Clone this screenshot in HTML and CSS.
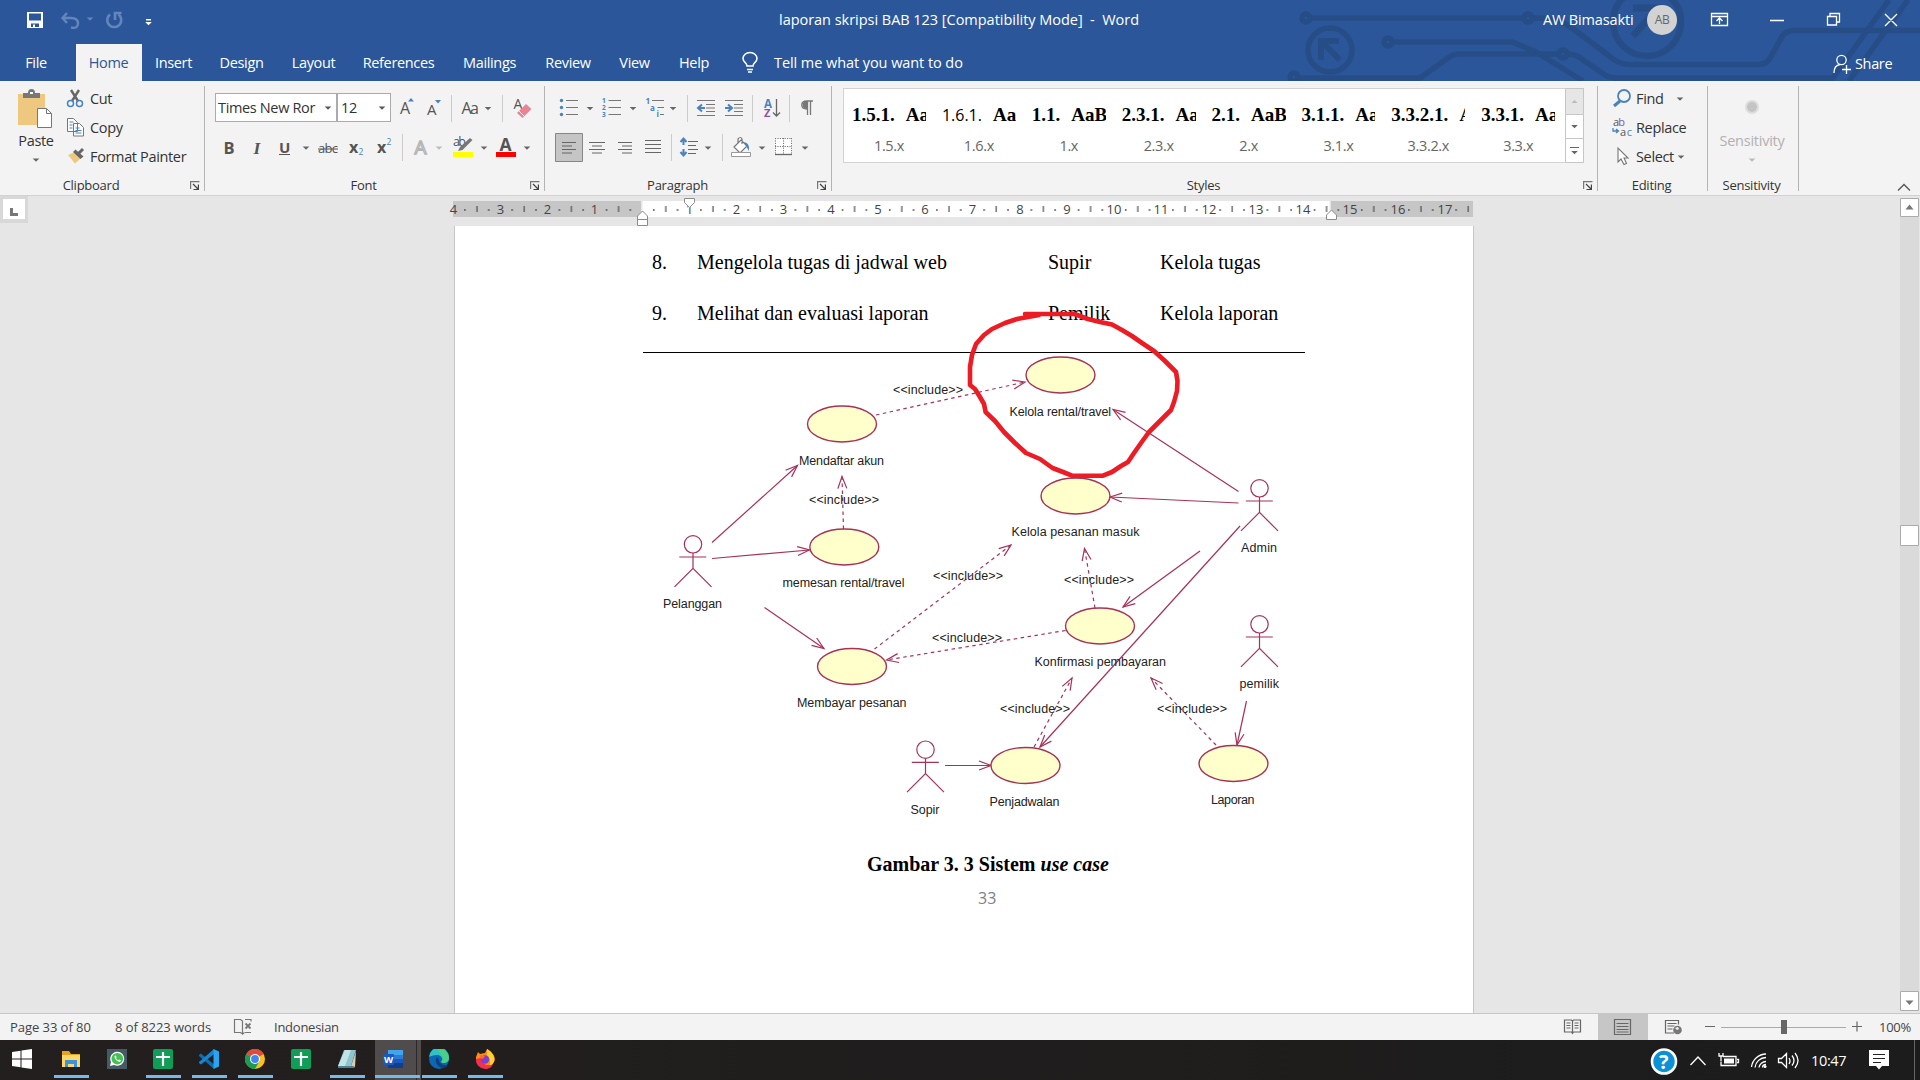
FILE: index.html
```html
<!DOCTYPE html>
<html lang="id">
<head>
<meta charset="utf-8">
<title>laporan skripsi BAB 123 [Compatibility Mode] - Word</title>
<link rel="stylesheet" href="styles.css">
</head>
<body>
<svg class="defs" width="0" height="0">
  <defs>
    <path id="arrow" d="M-3.3-1.6h6.6L0 1.8z"/>
    <g id="launcher" fill="none" stroke="#777" stroke-width="1.2"><path d="M.6 8V.6H9.5"/><path d="M3 3l5 5M8.4 3.5v5H3.5" stroke="#444"/></g>
    <g id="actor" fill="none" stroke="#a83158" stroke-width="1.2">
      <circle r="8.7" fill="#fff"/><path d="M0 8.7V24M-13.7 12.7h27M-18.5 42.5L0 24l18.5 18.5"/>
    </g>
    <ellipse id="usecase" rx="34.5" ry="18" fill="#ffffcc" stroke="#a83158" stroke-width="1.4"/>
    <marker id="head" markerUnits="userSpaceOnUse" markerWidth="16" markerHeight="14" refX="13" refY="6" orient="auto"><path d="M1 1.5L13 6 1 10.5" fill="none" stroke="#a83158" stroke-width="1.2"/></marker>
    <pattern id="ticks" patternUnits="userSpaceOnUse" x="642.1" y="0" width="47.2" height="300">
      <path d="M11 209h1.3v2H11zM23.1 206h1.2v6h-1.2zM34.8 209h1.3v2h-1.3z" fill="#505050"/>
    </pattern>
  </defs>
</svg>

<header class="titlebar">
  <svg class="circuit" width="640" height="81" viewBox="1280 0 640 81" fill="none" stroke="#264d86" stroke-width="5.5">
    <circle cx="1306" cy="18" r="4"/><circle cx="1528" cy="18" r="4"/><path d="M1310 18h214M1532 18c22 0 26 0 40 10l36 27q10 9 20 9.500h131q8 0 12-8l11-20q4-6 12-6h126"/>
    <circle cx="1388" cy="42" r="4"/><path d="M1392 42h120l24 10 47 29"/>
    <circle cx="1294" cy="77" r="4"/><path d="M1298 78h122l28-20q5-4 12-4h98"/><circle cx="1563" cy="54" r="4"/><path d="M1567 54q10 0 16 6l22 15q5 3 12 3h216l56-78M1849 81l59-81"/>
    <circle cx="1330" cy="50" r="22"/><path d="M1339 41h-18v19M1322 42l18 18" stroke-width="6"/>
    <circle cx="1647" cy="22" r="34" stroke-width="6.500"/><path d="M1633 8h25v21M1657 9l-24 27" stroke-width="7"/>
  </svg>
  <div class="title-row">
    <svg class="quick" width="160" height="43" viewBox="0 0 160 43">
      <path d="M27 12h16v16H27z" fill="#fff"/><path d="M29 13.500h12v7H29zM31 23.500h8V27H31z" fill="#2b579a"/><path d="M33 24.500h2V27h-2z" fill="#fff"/>
      <g fill="none" stroke="#6486bb" stroke-width="2.400"><path d="M67 13l-4.500 5 4.500 5M62.500 18H71q7 0 7 5.500t-7 4"/><path d="M118.500 14.500a7 7 0 1 1-8.500 0M115 20v-7h6.500" stroke-width="2.600"/></g>
      <use href="#arrow" x="90" y="19" fill="#6486bb"/><path d="M146 19h5v1.500h-5z" fill="#fff"/><use href="#arrow" x="148.500" y="23.500" fill="#fff"/>
    </svg>
    <div class="doc-title">laporan skripsi BAB 123 [Compatibility Mode]&nbsp; -&nbsp; Word</div>
    <div class="user">AW Bimasakti</div>
    <div class="avatar">AB</div>
    <svg class="window" width="243" height="43" viewBox="1677 0 243 43" fill="none" stroke="#fff" stroke-width="1.300">
      <path d="M1711.500 13.500h16v12h-16zM1711 16.500h17M1719.500 24v-6M1716.500 21l3-3 3 3M1770 20.500h14M1827.500 16.500h9v8.500h-9zM1830 16v-2.500h9.500V22h-3M1885 14l12 12M1897 14l-12 12"/>
    </svg>
  </div>
  <nav class="tabs">
    <span class="file">File</span><span class="active">Home</span><span>Insert</span><span>Design</span><span>Layout</span><span>References</span><span>Mailings</span><span>Review</span><span>View</span><span>Help</span>
    <svg width="50" height="38" viewBox="724 43 50 38" fill="none" stroke="#fff" stroke-width="1.600"><path d="M747 65c0-3-4-4-4-7.500a7 6 0 0 1 14 0c0 3.500-4 4.500-4 7.500zM747 68.500h6M748 71h4"/></svg>
    <span class="tell">Tell me what you want to do</span>
    <span class="share"><svg width="18" height="20" viewBox="1833 53 18 20" fill="none" stroke="#fff" stroke-width="1.300"><circle cx="1841.500" cy="59" r="4.700"/><path d="M1834 72c0-5 2-8 6-8.500M1842 68.500h9M1846.500 64v9"/></svg>Share</span>
  </nav>
</header>

<section class="ribbon">
  <div class="group clipboard">
    <div class="group-body">
      <div class="big paste">
        <svg width="40" height="42" viewBox="20 88 40 42"><path d="M22 94h27v31H22z" fill="#edc87e"/><path d="M27 98v-5h5q0-4 3.500-4t3.500 4h5v5z" fill="#777"/><path d="M34 92h3v2h-3z" fill="#fff"/><path d="M41.500 108.500h9l5 5v14h-14z" fill="#fff" stroke="#777"/><path d="M50.500 108.500v5h5" fill="none" stroke="#777"/></svg>
        <span>Paste</span>
        <svg width="10" height="6" viewBox="-5 -3 10 6"><use href="#arrow" fill="#666"/></svg>
      </div>
      <div class="stack">
        <div><svg width="24" height="29" viewBox="66 84 24 29" fill="none"><path d="M71 90l7 11M79 90l-7 11" stroke="#666" stroke-width="2.400"/><circle cx="70.500" cy="103.500" r="3" stroke="#4a82bd" stroke-width="1.500"/><circle cx="79.500" cy="103.500" r="3" stroke="#4a82bd" stroke-width="1.500"/></svg>Cut</div>
        <div><svg width="24" height="29" viewBox="66 113 24 29" fill="#fff" stroke="#777"><path d="M67.500 118.500h6l4 4v9h-10zM73.500 123.500h6l4 4v8.500h-10z"/><path d="M69.500 122h4M69.500 125h3M69.500 128h3M75.500 128h4M75.500 130.500h6M75.500 133h6" stroke="#4a82bd"/></svg>Copy</div>
        <div><svg width="24" height="29" viewBox="66 142 24 29"><path d="M68 155l7-3 6 6-6 5.500z" fill="#edc87e"/><path d="M73 152l2.500-2.500 8 7-3 2.500z" fill="#666"/><path d="M78 154l5-5" stroke="#666" stroke-width="3"/></svg>Format Painter</div>
      </div>
    </div>
    <div class="group-label">Clipboard<svg width="10" height="9"><use href="#launcher"/></svg></div>
  </div>

  <div class="group font">
    <div class="group-body rows">
      <div class="row">
        <div class="combo name"><span>Times New Ror</span><svg width="16" height="26" viewBox="-8 -13 16 26"><use href="#arrow" fill="#555"/></svg></div>
        <div class="combo size"><span>12</span><svg width="16" height="26" viewBox="-8 -13 16 26"><use href="#arrow" fill="#555"/></svg></div>
        <svg width="29" height="30" viewBox="391 93 29 30"><text x="400" y="114" class="ic" font-size="16" textLength="10">A</text><path d="M408 101.500h6l-3-3.500z" fill="#4a82bd"/></svg>
        <svg width="31" height="30" viewBox="420 93 31 30"><text x="427" y="115" class="ic" font-size="15" textLength="9.500">A</text><path d="M435 100h6l-3 3.500z" fill="#4a82bd"/></svg>
        <svg width="51" height="30" viewBox="451 93 51 30"><path d="M451.500 95v27" stroke="#ccc"/><text x="461.500" y="114" class="ic" font-size="16" textLength="17.500">Aa</text><use href="#arrow" x="488" y="108.500" fill="#666"/></svg>
        <svg width="42" height="30" viewBox="502 93 42 30"><path d="M502.500 95v27" stroke="#ccc"/><text x="513.500" y="109" class="ic" font-size="14">A</text><path d="M517 113l9-9 5.500 5-9 9z" fill="#e98497"/><path d="M518.500 110.500l6 6" stroke="#f3f3f3"/></svg>
      </div>
      <div class="row">
        <svg width="28" height="30" viewBox="215 133 28 30"><text x="223.500" y="153.500" class="ic b" font-size="16.500" textLength="9.500">B</text></svg>
        <svg width="24" height="30" viewBox="243 133 24 30"><text x="253.500" y="153.500" class="ic serif" font-size="17.500">I</text></svg>
        <svg width="46" height="30" viewBox="267 133 46 30"><text x="279" y="152.500" class="ic b" font-size="15" textLength="10.500">U</text><path d="M279 154.500h11" stroke="#555"/><use href="#arrow" x="306" y="148" fill="#666"/></svg>
        <svg width="30" height="30" viewBox="313 133 30 30"><text x="318" y="153" class="ic" font-size="13" textLength="20">abc</text><path d="M318 149h20" stroke="#555"/></svg>
        <svg width="27" height="30" viewBox="343 133 27 30"><text x="349" y="153" class="ic b" font-size="16" textLength="9">x</text><text x="358.500" y="155" class="blue" font-size="8.500">2</text></svg>
        <svg width="32" height="30" viewBox="370 133 32 30"><text x="377" y="153" class="ic b" font-size="16" textLength="9">x</text><text x="386.500" y="145" class="blue" font-size="8.500">2</text></svg>
        <svg width="43" height="30" viewBox="402 133 43 30"><path d="M402.500 134v27" stroke="#ccc"/><text x="414.500" y="154" font-size="19" fill="#fff" stroke="#b4b4b4" stroke-width="1.300" textLength="13">A</text><use href="#arrow" x="439" y="148" fill="#bbb"/></svg>
        <svg width="45" height="30" viewBox="445 133 45 30"><text x="453" y="146" class="ic" font-size="12.500" textLength="13">ab</text><path d="M458 151l2-4 10-9 2.500 2-10 10z" fill="#777"/><path d="M453 152h20v5h-20z" fill="#ff0"/><use href="#arrow" x="484" y="148" fill="#666"/></svg>
        <svg width="54" height="30" viewBox="490 133 54 30"><text x="499.500" y="151" class="ic b" font-size="17.500" textLength="12.500">A</text><path d="M496 152h20v5h-20z" fill="red"/><use href="#arrow" x="527" y="148" fill="#666"/></svg>
      </div>
    </div>
    <div class="group-label">Font<svg width="10" height="9"><use href="#launcher"/></svg></div>
  </div>

  <div class="group paragraph">
    <div class="group-body rows">
      <div class="row">
        <svg width="45" height="30" viewBox="555 93 45 30"><path d="M566 100.500h12M566 107.500h12M566 114.500h12" stroke="#777" stroke-width="1.200"/><g fill="#4a82bd"><circle cx="561.500" cy="100.500" r="1.700"/><circle cx="561.500" cy="107.500" r="1.700"/><circle cx="561.500" cy="114.500" r="1.700"/></g><use href="#arrow" x="590" y="108.500" fill="#666"/></svg>
        <svg width="42" height="30" viewBox="600 93 42 30"><path d="M608.500 100.500H621M608.500 107.500H621M608.500 114.500H621" stroke="#777" stroke-width="1.200"/><g class="blue b" font-size="6.500"><text x="602" y="103">1</text><text x="602" y="110">2</text><text x="602" y="117">3</text></g><use href="#arrow" x="633" y="108.500" fill="#666"/></svg>
        <svg width="45" height="30" viewBox="642 93 45 30"><path d="M652 100.500h12M657.500 107.500h6.500M660 114.500h4" stroke="#777" stroke-width="1.200"/><g class="blue b" font-size="8"><text x="645.500" y="104">1</text><text x="650" y="111">a</text><text x="656.500" y="117">i</text></g><use href="#arrow" x="673" y="108.500" fill="#666"/></svg>
        <svg width="34" height="30" viewBox="687 93 34 30"><path d="M687.500 95v27" stroke="#ccc"/><path d="M697 100.500h18M706 104.500h9M706 108h9M706 111.500h9M697 115.500h18" stroke="#777" stroke-width="1.200"/><path d="M698 108h7M702 104.500l-4 3.500 4 3.500" fill="none" stroke="#4a82bd" stroke-width="2"/></svg>
        <svg width="31" height="30" viewBox="721 93 31 30"><path d="M725 100.500h18M734 104.500h9M734 108h9M734 111.500h9M725 115.500h18" stroke="#777" stroke-width="1.200"/><path d="M725 108h7M728 104.500l4 3.500-4 3.500" fill="none" stroke="#4a82bd" stroke-width="2"/></svg>
        <svg width="37" height="30" viewBox="752 93 37 30"><path d="M752.500 95v27" stroke="#ccc"/><text x="764" y="107.500" font-size="11.500" class="blue b" textLength="8">A</text><text x="764" y="117" font-size="11" class="b" fill="#8a52ab" textLength="7">Z</text><path d="M776.500 99v17M773 112.500l3.500 3.500 3.500-3.500" fill="none" stroke="#666" stroke-width="1.300"/></svg>
        <svg width="34" height="30" viewBox="789 93 34 30"><path d="M789.500 95v27" stroke="#ccc"/><path d="M807 109c-7 0-7-8 0-8h6M807.500 101v14M810.500 101v14" fill="none" stroke="#777" stroke-width="1.300"/><path d="M807 101c-6 0-6 8 0 8z" fill="#777"/></svg>
      </div>
      <div class="row">
        <svg width="28" height="30" viewBox="555 133 28 30"><path d="M555.500 133.500h27v28h-27z" fill="#c5c5c5" stroke="#868686"/><path d="M562 142.500h14M562 146h10M562 149.500h14M562 153h10" stroke="#666" stroke-width="1.200"/></svg>
        <svg width="28" height="30" viewBox="583 133 28 30"><path d="M589 142.500h16M592 146h10M589 149.500h16M592 153h10" stroke="#666" stroke-width="1.200"/></svg>
        <svg width="28" height="30" viewBox="611 133 28 30"><path d="M618 142.500h14M622 146h10M618 149.500h14M622 153h10" stroke="#666" stroke-width="1.200"/></svg>
        <svg width="32" height="30" viewBox="639 133 32 30"><path d="M645 140.500h16M645 144.500h16M645 148.500h16M645 152.500h16" stroke="#666" stroke-width="1.200"/></svg>
        <svg width="51" height="30" viewBox="671 133 51 30"><path d="M671.500 134v27" stroke="#ccc"/><path d="M688 141.500h10M688 145.500h8M688 149.500h10M688 153.500h8" stroke="#666" stroke-width="1.200"/><path d="M683.500 139v6M683.500 149v6M680.500 142l3-3.500 3 3.500M680.500 152l3 3.500 3-3.500" fill="none" stroke="#4a82bd" stroke-width="2"/><use href="#arrow" x="708" y="148" fill="#666"/></svg>
        <svg width="49" height="30" viewBox="722 133 49 30"><path d="M722.500 134v27" stroke="#ccc"/><path d="M734 147l7-7 6 6-7 7zM738 143v-4q2.500-3 4 0v5" fill="#fff" stroke="#777" stroke-width="1.200"/><path d="M744 142q6 1 5 9l-3-5z" fill="#4a82bd"/><path d="M731.500 152.500h19v4h-19z" fill="#fff" stroke="#999"/><use href="#arrow" x="762" y="148" fill="#666"/></svg>
        <svg width="50" height="30" viewBox="771 133 50 30"><path d="M775 138h17v16h-17z" fill="#fff"/><path d="M775 138.500h17M775 146.500h17M775.500 138v16M783.500 138v16M791.500 138v16" stroke="#777" stroke-dasharray="1.200 1.200"/><path d="M775 154.500h17" stroke="#666" stroke-width="1.300"/><use href="#arrow" x="805" y="148" fill="#666"/></svg>
      </div>
    </div>
    <div class="group-label">Paragraph<svg width="10" height="9"><use href="#launcher"/></svg></div>
  </div>

  <div class="group styles">
    <div class="group-body">
      <div class="gallery">
        <div class="style"><b>1.5.1.&nbsp; AaB</b><span>1.5.x</span></div>
        <div class="style"><b><i>1.6.1.</i>&nbsp; AaB</b><span>1.6.x</span></div>
        <div class="style"><b>1.1.&nbsp; AaB</b><span>1.x</span></div>
        <div class="style"><b>2.3.1.&nbsp; AaB</b><span>2.3.x</span></div>
        <div class="style"><b>2.1.&nbsp; AaB</b><span>2.x</span></div>
        <div class="style"><b>3.1.1.&nbsp; AaB</b><span>3.1.x</span></div>
        <div class="style"><b>3.3.2.1.&nbsp; AaB</b><span>3.3.2.x</span></div>
        <div class="style"><b>3.3.1.&nbsp; AaB</b><span>3.3.x</span></div>
        <svg width="19" height="75" viewBox="1565 88 19 75"><path d="M1565.500 88.500h18v26h-18z" fill="#e6e6e6" stroke="#c6c6c6"/><path d="M1565.500 114.500h18v24h-18zM1565.500 138.500h18v24h-18z" fill="#fff" stroke="#c6c6c6"/><path d="M1571.500 103h6l-3-3z" fill="#bbb"/><use href="#arrow" x="1574.500" y="126.500" fill="#666"/><use href="#arrow" x="1574.500" y="152.500" fill="#666"/><path d="M1570 147.500h9" stroke="#666"/></svg>
      </div>
    </div>
    <div class="group-label">Styles<svg width="10" height="9"><use href="#launcher"/></svg></div>
  </div>

  <div class="group editing">
    <div class="group-body">
      <div class="stack">
        <div><svg width="26" height="29" viewBox="1610 84 26 29" fill="none" stroke="#4a82bd"><circle cx="1624" cy="96" r="6" stroke-width="1.800"/><path d="M1620 101l-6 5" stroke-width="3"/></svg>Find<svg class="gap" width="8" height="6" viewBox="-4 -3 8 6"><use href="#arrow" fill="#666"/></svg></div>
        <div><svg width="26" height="29" viewBox="1610 113 26 29"><text x="1613" y="126" font-size="11" textLength="12"><tspan fill="#555">a</tspan><tspan fill="#8a52ab">b</tspan></text><text x="1620" y="136" font-size="11" textLength="12"><tspan fill="#555">a</tspan><tspan fill="#4a82bd">c</tspan></text><path d="M1613 128v3h5M1616 129l2.500 2-2.500 2" fill="none" stroke="#4a82bd" stroke-width="1.300"/></svg>Replace</div>
        <div><svg width="26" height="29" viewBox="1610 142 26 29"><path d="M1618 148v14l3-3 3 5.500 2.500-1-2.500-5.500h4z" fill="#fff" stroke="#777" stroke-width="1.100"/></svg>Select<svg class="near" width="8" height="6" viewBox="-4 -3 8 6"><use href="#arrow" fill="#666"/></svg></div>
      </div>
    </div>
    <div class="group-label">Editing</div>
  </div>

  <div class="group sensitivity">
    <div class="group-body">
      <div class="big">
        <svg width="40" height="42" viewBox="1732 88 40 42"><circle cx="1752" cy="107" r="7" fill="#ddd"/><circle cx="1752" cy="107" r="5" fill="#c4c4c4"/></svg>
        <span>Sensitivity</span>
        <svg width="10" height="6" viewBox="-5 -3 10 6"><use href="#arrow" fill="#bbb"/></svg>
      </div>
    </div>
    <div class="group-label">Sensitivity</div>
  </div>
  <svg class="collapse" width="14" height="9" viewBox="0 0 14 9"><path d="M1 7.500l6-6 6 6" fill="none" stroke="#555" stroke-width="1.300"/></svg>
</section>

<main class="workspace">
  <div class="corner"><div>
    <svg width="22" height="20" viewBox="3 199 22 20"><path d="M10 208h3v5h5v3h-8z" fill="#777"/></svg></div>
  </div>
  <div class="canvas">
    <svg class="ruler" width="1032" height="30" viewBox="448 196 1032 30">
      <path d="M453 201h188v16H453zM1331 201h142v16h-142z" fill="#c6c6c6"/><path d="M642.500 201h687v16h-687z" fill="#fff"/>
      <path d="M457 201h1016v16H457z" fill="url(#ticks)"/>
      <g class="ruler-num">
        <text x="453.500" y="214">4</text><text x="500.500" y="214">3</text><text x="547.500" y="214">2</text><text x="594.500" y="214">1</text>
        <text x="689.500" y="214">1</text><text x="736.500" y="214">2</text><text x="783.500" y="214">3</text><text x="831" y="214">4</text><text x="878" y="214">5</text><text x="925" y="214">6</text><text x="972.500" y="214">7</text><text x="1020" y="214">8</text><text x="1067" y="214">9</text><text x="1114" y="214">10</text><text x="1161" y="214">11</text><text x="1209" y="214">12</text><text x="1256" y="214">13</text><text x="1303" y="214">14</text><text x="1350" y="214">15</text><text x="1398" y="214">16</text><text x="1445" y="214">17</text>
      </g>
      <g fill="#fff" stroke="#8c8c8c"><path d="M684.500 198.500h10v4l-5 5-5-5zM637.500 216l5-5 5 5v9.500h-10zM637.500 219.500h10M1326.500 215l5-5 5 5v4.500h-10z"/></g>
    </svg>
    <article class="page">
      <div class="table">
        <span>8.</span><span>Mengelola tugas di jadwal web</span><span>Supir</span><span>Kelola tugas</span>
        <span>9.</span><span>Melihat dan evaluasi laporan</span><span>Pemilik</span><span>Kelola laporan</span>
      </div>
      <svg class="diagram" width="700" height="470" viewBox="630 353 700 470">
        <g fill="none" stroke="#a83158" stroke-width="1.200">
          <g stroke-dasharray="3.500 3.500">
            <path marker-end="url(#head)" d="M876 415L1025 382"/><path marker-end="url(#head)" d="M843.500 529L842 476.500"/>
            <path marker-end="url(#head)" d="M874.500 649L1011 545"/><path marker-end="url(#head)" d="M1065.500 630.500L886.500 660"/>
            <path marker-end="url(#head)" d="M1095 608L1084.500 548.500"/><path marker-end="url(#head)" d="M1034 747L1072 678"/>
            <path marker-end="url(#head)" d="M1216 745L1151 678"/>
          </g>
          <path marker-end="url(#head)" d="M712 542.500L797.500 465.500"/><path marker-end="url(#head)" d="M712 558.500L809.500 550"/>
          <path marker-end="url(#head)" d="M764.500 607.500L824 648.500"/><path marker-end="url(#head)" d="M1238.500 491.500L1113 409.500"/>
          <path marker-end="url(#head)" d="M1238.500 503L1110 497"/><path marker-end="url(#head)" d="M1200 551L1123 607"/>
          <path marker-end="url(#head)" d="M1240 526L1040 747"/><path marker-end="url(#head)" d="M1246.500 701L1237 745"/>
          <path marker-end="url(#head)" d="M945 765.500H991"/>
        </g>
        <use href="#usecase" x="1060.500" y="375"/><use href="#usecase" x="842" y="424"/><use href="#usecase" x="1075.500" y="496"/><use href="#usecase" x="844.300" y="547"/><use href="#usecase" x="1100" y="626"/><use href="#usecase" x="852" y="666.500"/><use href="#usecase" x="1025.500" y="765.500"/><use href="#usecase" x="1233.500" y="763.500"/>
        <use href="#actor" x="693" y="544.300"/><use href="#actor" x="1259.500" y="488.300"/><use href="#actor" x="1259.500" y="624.300"/><use href="#actor" x="925.500" y="749.700"/>
        <g class="uml">
          <text x="1009.500" y="415.500" textLength="101.500">Kelola rental/travel</text><text x="799" y="464.500" textLength="85">Mendaftar akun</text>
          <text x="1011.500" y="536" textLength="128">Kelola pesanan masuk</text><text x="782.500" y="587" textLength="122">memesan rental/travel</text>
          <text x="1034.500" y="666" textLength="131.500">Konfirmasi pembayaran</text><text x="797" y="707" textLength="109.500">Membayar pesanan</text>
          <text x="989.500" y="806" textLength="70">Penjadwalan</text><text x="1211" y="804" textLength="43.500">Laporan</text>
          <text x="910.500" y="814" textLength="29">Sopir</text><text x="663" y="608" textLength="59">Pelanggan</text><text x="1241" y="552" textLength="36">Admin</text><text x="1239.500" y="688" textLength="39.500">pemilik</text>
          <text x="893" y="393.500" textLength="70">&lt;&lt;include&gt;&gt;</text><text x="809" y="503.500" textLength="70">&lt;&lt;include&gt;&gt;</text><text x="933" y="580" textLength="70">&lt;&lt;include&gt;&gt;</text><text x="1064" y="584" textLength="70">&lt;&lt;include&gt;&gt;</text><text x="932" y="642" textLength="70">&lt;&lt;include&gt;&gt;</text><text x="1000" y="713" textLength="70">&lt;&lt;include&gt;&gt;</text><text x="1157" y="713" textLength="70">&lt;&lt;include&gt;&gt;</text>
        </g>
        <path class="scribble" d="M1025 314H1074.500L1088 319 1100 322 1112 324.500 1122 330 1132 336 1142 343 1154 351 1165 361 1176 372 1177.500 381 1177 391 1174 402 1171 410 1160 421 1149 432 1141 443 1134 453 1128 462 1121 466 1112 472 1103 475.700H1072L1063 472 1052.500 468 1040 459 1026 453 1015 443 1004 432 995 421 985.600 412 984 404 980 397 975 389 970 385 970 367 972 355 976 344 984 335 992 329 1005 323 1017 319 1039 315"/>
      </svg>
      <p class="caption">Gambar 3. 3 Sistem <em>use case</em></p>
      <p class="page-no">33</p>
    </article>
  </div>
  <div class="scroll">
    <svg width="20" height="817" viewBox="1900 196 20 817"><path d="M1900 217h19v774h-19z" fill="#dadada"/><g fill="#fff" stroke="#ababab"><path d="M1900.500 198.500h18v18h-18zM1900.500 525.500h18v20h-18zM1900.500 991.500h18v19h-18z"/></g><path d="M1905.500 209.500h8l-4-5zM1905.500 1000.500h8l-4 4.500z" fill="#777"/></svg>
  </div>
</main>

<footer class="status">
  <span class="s1">Page 33 of 80</span><span class="s2">8 of 8223 words</span>
  <svg width="20" height="18" viewBox="233 1018 20 18" fill="none" stroke="#777" stroke-width="1.200"><path d="M242.500 1034v-13l-2-1.500h-6v13h6zl2-1.500M245 1032.500h6M245 1019.500h6v2"/><path d="M245.500 1023.500l5 5M250.500 1023.500l-5 5" stroke-width="1.800"/></svg>
  <span class="s3">Indonesian</span>
  <svg class="views" width="316" height="26" viewBox="1555 1014 316 26" fill="none" stroke="#666" stroke-width="1.200">
    <path d="M1598 1014h50v26h-50z" fill="#c6c6c6" stroke="none"/>
    <path d="M1564.500 1020h7l1 1 1-1h7v12h-7l-1 1.500-1-1.500h-7zM1572.500 1021v12M1566.500 1023h4M1566.500 1025.500h4M1566.500 1028h4M1574.500 1023h4M1574.500 1025.500h4M1574.500 1028h4"/>
    <path d="M1614.500 1019.500h16v15h-16zM1616.500 1023.500h12M1616.500 1026.500h12M1616.500 1029.500h12M1616.500 1032h12"/>
    <path d="M1674 1033h-8.500v-12.500h13v4M1667.500 1023.500h9M1667.500 1026h7M1667.500 1029h5"/><circle cx="1677.500" cy="1030" r="4.300" fill="#777" stroke="none"/><path d="M1675 1028l3-1 1 2-2 1z" fill="#f3f3f3" stroke="none"/>
    <path d="M1705 1026.500h10M1852 1026.500h10M1857 1021.500v10"/><path d="M1721 1027.500h125" stroke="#aaa"/><path d="M1781 1020h6v14h-6z" fill="#666" stroke="none"/>
  </svg>
  <span class="zoom">100%</span>
</footer>

<div class="taskbar">
  <div class="task plain"><svg width="20" height="20" viewBox="0 0 20 20" fill="#fff"><path d="M0 3l8.500-1.200v7.700H0zM9.500 1.600L20 0v9.500H9.500zM0 10.500h8.500v7.700L0 17zM9.500 10.500H20V20L9.500 18.500z"/></svg></div>
  <div class="task open"><svg width="20" height="20" viewBox="0 0 20 20"><path d="M1 2h7l2 3h9v13H1z" fill="#e8a31d"/><path d="M1 6h18v12H1z" fill="#ffd767"/><path d="M4 11h12v7h-3v-3H7v3H4z" fill="#3a93dd"/></svg></div>
  <div class="task"><svg width="20" height="20" viewBox="0 0 20 20"><path d="M0 0h20v20H0z" fill="#455a64"/><path d="M3 17l1-4a7 7 0 1 1 3 3z" fill="#fff"/><circle cx="10.300" cy="9.700" r="5.800" fill="#40c351"/><path d="M7.500 7c0 3 2.500 5.500 5.500 6l1-1.500-2-1-1 .7-2-2 .6-1-.8-1.700z" fill="#fff"/></svg></div>
  <div class="task open"><svg width="20" height="20" viewBox="0 0 20 20"><rect width="20" height="20" rx="2" fill="#0f9d58"/><path d="M10 3v14M3 8h14" stroke="#fff" stroke-width="2.200"/></svg></div>
  <div class="task open"><svg width="20" height="20" viewBox="0 0 20 20"><path d="M0 6l2-1.500 13 11V20L0 7z" fill="#0b6fb8"/><path d="M0 14l2 1.500L15 5V0L0 13z" fill="#1684cf"/><path d="M14.500 0L20 2.500v15L14.500 20z" fill="#27a5f2"/></svg></div>
  <div class="task open"><svg width="20" height="20" viewBox="0 0 20 20"><circle cx="10" cy="10" r="10" fill="#fbc116"/><path d="M10 10L1.300 5A10 10 0 0 1 18.700 5z" fill="#dd4b3e"/><path d="M1.300 5A10 10 0 0 0 10 20l4.300-7.500L10 10z" fill="#1a9d52"/><circle cx="10" cy="10" r="5" fill="#fff"/><circle cx="10" cy="10" r="3.900" fill="#4285f4"/></svg></div>
  <div class="task"><svg width="20" height="20" viewBox="0 0 20 20"><rect width="20" height="20" rx="2" fill="#0f9d58"/><path d="M10 3v14M3 8h14" stroke="#fff" stroke-width="2.200"/></svg></div>
  <div class="task open"><svg width="20" height="20" viewBox="0 0 20 20"><path d="M7 1h12l-5 16H1z" fill="#8dc4cf"/><path d="M8 1h6L8 17H1z" fill="#c2e4e8"/><path d="M19 2l-1 16-4-1z" fill="#d6cdb0"/><path d="M1 17h13l4 1-1 1H1z" fill="#488390"/></svg></div>
  <div class="task open current"><svg width="20" height="20" viewBox="0 0 20 20"><path d="M5 1h15v18H5z" fill="#185abd"/><path d="M5 1h15v5H5z" fill="#41a5ee"/><path d="M5 6h15v4H5z" fill="#2b7cd3"/><path d="M5 14h15v5H5z" fill="#103f91"/><rect y="5" width="11" height="11" rx="1" fill="#185abd"/><text x="1" y="14" font-size="9.500" font-weight="700" fill="#fff">W</text></svg></div>
  <div class="task open"><svg width="20" height="20" viewBox="0 0 20 20"><circle cx="10" cy="10" r="10" fill="#0c67b6"/><path d="M0 8a10 10 0 0 1 20 1c0 5-6 6-8 4 3-3 0-7-4-7-4 0-6 1-8 2z" fill="#2fc3c8"/><path d="M9 0a10 10 0 0 1 11 9c0 5-6 6-8 4 3-2 2-6 0-7z" fill="#55d36b" opacity=".75"/><path d="M8 8c-3 4 0 10 6 11 2 0 4-2 5-3-5 1-9-2-9-5z" fill="#123f7c"/></svg></div>
  <div class="task open"><svg width="20" height="20" viewBox="0 0 20 20"><path d="M1 8l2-5 2 2 5-1 2-4c4 2 8 6 8 11a10 9 0 0 1-19 0z" fill="#ff8a1e"/><path d="M12 0c4 3 8 6 7 12-1 3-3 6-6 7 3-4 3-9-1-13z" fill="#ffd32d"/><path d="M1 10a10 9 0 0 0 9 10c4 0 7-2 8-5-6 3-11 0-12-6z" fill="#f5304d"/><circle cx="10" cy="10.500" r="4.200" fill="#7b3fd6"/><path d="M5 6l5 1-2 3-3-1z" fill="#ff6a2b"/></svg></div>
  <svg class="tray" width="160" height="40" viewBox="1648 1040 160 40" fill="none" stroke="#fff" stroke-width="1.300">
    <circle cx="1664" cy="1061.500" r="12" fill="#0a91d6" stroke-width="2.600"/><text x="1659" y="1069" font-size="20" font-weight="700" fill="#fff" stroke="none" textLength="10">?</text>
    <path d="M1690.500 1065l7.500-8 7.500 8"/><path d="M1723 1056.500h13v9h-15v-4M1737 1059.500h1.500v3h-1.500M1719 1053v3h4v-3M1721 1056v5"/><path d="M1724 1058.500h10v5h-10z" fill="#fff" stroke="none"/>
    <path d="M1751.500 1067a15 15 0 0 1 14.500-13M1755 1067.500a11 11 0 0 1 11-10M1759 1067.500a7 7 0 0 1 7-6M1762.500 1067.500q0-3 3.500-3"/><circle cx="1765" cy="1066.500" r="1.500" fill="#fff" stroke="none"/>
    <path d="M1778.500 1058.500h3l5-5v14l-5-5h-3zM1789 1058q2 3 0 6M1792 1055.500q4 5 0 10M1795 1053q6 7.500 0 15"/>
  </svg>
  <span class="clock">10:47</span>
  <svg class="notes" width="52" height="40" viewBox="1868 1040 52 40"><path d="M1869 1050h20v16h-7l-3 3.500-3-3.500h-7z" fill="#fff"/><path d="M1873 1054.500h12M1873 1058.500h12M1873 1062.500h8" stroke="#222" stroke-width="1.200"/><path d="M1914.500 1040v40" stroke="#666"/></svg>
</div>
</body>
</html>
```
FILE: styles.css
```css
* { box-sizing: border-box; }
body {
  margin: 0;
  width: 1920px;
  height: 1080px;
  overflow: hidden;
  display: flex;
  flex-direction: column;
  font: 14.5px "Open Sans", "Noto Sans", sans-serif;
  letter-spacing: -0.35px;
  color: #333;
  background: #e6e6e6;
}
svg { display: block; flex: none; }
svg text { letter-spacing: 0; }
.defs { position: absolute; }

/* Title bar and tabs */
.titlebar { height: 81px; flex: none; position: relative; background: #2b579a; color: #fff; }
.circuit { position: absolute; right: 0; top: 0; }
.title-row, .tabs { position: relative; display: flex; align-items: center; }
.title-row { height: 43px; padding-bottom: 4px; }
.title-row > svg { margin-bottom: -4px; }
.doc-title { width: 363px; margin-left: 619px; white-space: nowrap; letter-spacing: -0.03px; }
.user { width: 92px; margin-left: 401px; white-space: nowrap; letter-spacing: -0.15px; }
.avatar { width: 30px; height: 30px; margin-left: 12px; border-radius: 50%; background: #d2d2d2; color: #666; font-size: 12px; line-height: 30px; text-align: center; }
.tabs { height: 38px; display: grid; grid-template-columns: 76px 66px 63px 73px 71px 99px 83px 74px 59px 60px 50px 1fr auto; }
.tabs > span { text-align: center; line-height: 38px; white-space: nowrap; }
.tabs .file { padding-right: 4px; }
.tabs .active { background: #f3f3f3; color: #2b579a; height: 38px; padding-right: 1px; }
.tabs .tell { text-align: left; letter-spacing: -0.07px; }
.tabs .share { display: flex; align-items: center; gap: 4px; width: 87px; padding-top: 2px; }

/* Ribbon */
.ribbon { height: 115px; flex: none; display: flex; background: #f3f3f3; border-bottom: 1px solid #d2d2d2; }
.group { position: relative; display: flex; flex-direction: column; border-right: 1px solid #b4b4b4; height: 105px; margin-top: 5px; }
.group-body { display: flex; height: 89px; flex: none; }
.group-label { position: relative; height: 20px; flex: none; line-height: 20px; text-align: center; font-size: 13px; letter-spacing: -0.25px; color: #333; }
.group-label svg { position: absolute; right: 4px; top: 6px; }
.clipboard { width: 205px; }
.clipboard .group-label { padding-right: 22px; }
.font { width: 340px; }
.font .group-label { padding-right: 22px; }
.paragraph { width: 287px; }
.paragraph .group-label { padding-right: 21px; }
.styles { width: 766px; }
.styles .group-label { padding-right: 22px; }
.editing { width: 110px; }
.sensitivity { width: 91px; }
.big { display: flex; flex-direction: column; align-items: center; width: 72px; padding-top: 2px; line-height: 22px; }
.sensitivity .big { width: 88px; color: #b1b1b1; letter-spacing: -0.25px; }
.sensitivity .group-label { padding-right: 3px; }
.editing .group-label { padding-right: 2px; }
.big svg + span { margin-bottom: 5px; }
.paste { margin-right: -6px; }
.stack { display: flex; flex-direction: column; margin-top: -2px; }
.stack > div { display: flex; align-items: center; height: 29px; white-space: nowrap; }
.editing .stack { padding-left: 12px; }
.gap { margin-left: 12px; }
.near { margin-left: 3px; }
.rows { flex-direction: column; gap: 10px; padding: 7px 0 0 10px; }
.row { display: flex; height: 30px; }
.combo { display: flex; align-items: center; justify-content: space-between; height: 29px; background: #fff; border: 1px solid #ababab; padding-left: 2px; white-space: nowrap; }
.combo.name { width: 122px; }
.combo.size { width: 54px; padding-left: 3px; }
.ic { fill: #555; }
.b { font-weight: 700; }
.serif { font: italic 700 17.5px "Liberation Serif", serif; }
.blue { fill: #4a82bd; }
.gallery { display: flex; margin: 2px 0 0 11px; width: 741px; height: 75px; background: #fff; border: 1px solid #d2d2d2; padding-left: 8px; }
.gallery svg { margin: -1px -1px 0 auto; }
.style { width: 74px; margin-right: 15.9px; overflow: hidden; white-space: nowrap; flex: none; display: flex; flex-direction: column; padding-top: 12px; }
.style:nth-child(8) { margin-right: 0; }
.style b { font: 700 19px/28px "Liberation Serif", serif; letter-spacing: 0; word-spacing: 1.3px; color: #000; }
.style i { font: 400 16px/24px "Open Sans", sans-serif; }
.style span { text-align: center; color: #666; line-height: 34px; }
.collapse { margin: 102px 0 0 98px; }

/* Document area */
.workspace { flex: none; height: 817px; display: flex; }
.corner { width: 28px; height: 27px; background: #d8d8d8; padding: 3px; }
.corner div { background: #fff; width: 22px; height: 20px; }
.canvas { flex: 1; display: flex; flex-direction: column; padding-left: 420px; overflow: hidden; }
.ruler-num { font: 13px "Open Sans", sans-serif; fill: #444; text-anchor: middle; }
.page { width: 1020px; height: 787px; margin-left: 6px; background: #fff; border: solid #c6c6c6; border-width: 0 1px; display: flex; flex-direction: column; letter-spacing: 0; }
.table { display: grid; grid-template-columns: 45px 351px 112px 1fr; grid-template-rows: 51px 51px; margin-left: 188px; padding: 11px 0 13px 9px; width: 662px; height: 127px; border-bottom: 1px solid #000; font: 20px/51px "Liberation Serif", serif; color: #000; white-space: nowrap; }
.diagram { margin-left: 175px; overflow: visible; position: relative; }
.uml { font: 12.5px "Liberation Sans", sans-serif; fill: #222; }
.scribble { fill: none; stroke: #ed1c24; stroke-width: 4.6; stroke-linejoin: round; stroke-linecap: round; }
.caption { margin: 27px 0 0 412px; font: 700 20px/28px "Liberation Serif", serif; color: #000; white-space: nowrap; }
.page-no { margin: 8px 0 0 523px; font-size: 16px; line-height: 24px; color: #808080; }
.scroll { width: 20px; }

/* Status bar */
.status { flex: none; height: 27px; border-top: 1px solid #c6c6c6; background: #f3f3f3; display: flex; align-items: center; font-size: 13px; color: #444; letter-spacing: -0.05px; white-space: nowrap; }
.s1 { width: 105px; margin-left: 10px; }
.s2 { width: 118px; }
.s3 { margin-left: 21px; letter-spacing: -0.25px; }
.views { margin-left: auto; }
.zoom { width: 49px; padding-left: 8px; letter-spacing: -0.3px; }

/* Taskbar */
.taskbar { flex: none; height: 40px; background: linear-gradient(90deg, #231f1e, #1c1c1c); display: flex; color: #fff; }
.task { width: 46px; display: flex; justify-content: center; align-items: center; position: relative; }
.task:nth-child(2) { margin-left: 4px; }
.task svg { margin-bottom: 2px; }
.plain { width: 44px; }
.open::after { content: ""; position: absolute; left: 6px; width: 35px; bottom: 2px; height: 3px; background: #76b9ed; }
.current { background: linear-gradient(90deg, transparent 5px, #504c4b 5px); }
.current::before { content: ""; position: absolute; left: 46px; top: 0; width: 4px; height: 40px; background: #504c4b; border-left: 1px solid #2c2928; }
.current::after { left: 5px; width: 45px; }
.tray { margin-left: auto; }
.clock { width: 60px; padding-left: 3px; line-height: 41px; }
```
